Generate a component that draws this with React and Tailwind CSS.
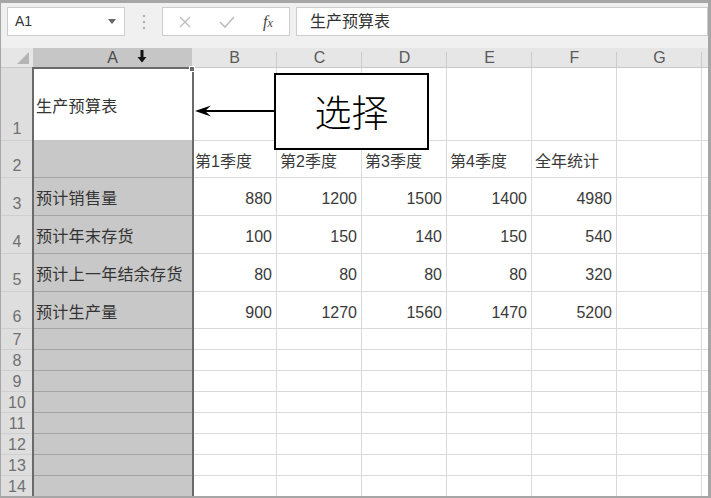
import React from "react";

// Sheet data: first entry is the column A label, the rest are B..F
const rows = [
  { n: 1, h: "73px", cells: ["生产预算表", "", "", "", "", "", ""] },
  { n: 2, h: "37px", cells: ["", "第1季度", "第2季度", "第3季度", "第4季度", "全年统计", ""], text: true },
  { n: 3, h: "38px", cells: ["预计销售量", "880", "1200", "1500", "1400", "4980", ""] },
  { n: 4, h: "38px", cells: ["预计年末存货", "100", "150", "140", "150", "540", ""] },
  { n: 5, h: "38px", cells: ["预计上一年结余存货", "80", "80", "80", "80", "320", ""] },
  { n: 6, h: "37px", cells: ["预计生产量", "900", "1270", "1560", "1470", "5200", ""] },
];
const emptyRows = [7, 8, 9, 10, 11, 12, 13, 14];
const cols = ["A", "B", "C", "D", "E", "F", "G"];

const font = { fontFamily: '"Liberation Sans", "Noto Sans CJK SC", sans-serif' };

function Cell({ value, col, rowNum, isText }) {
  if (col === 0) {
    const active = rowNum === 1;
    return (
      <div
        className={
          "flex items-center pl-[3px] pt-[5px] text-[16px] tracking-[0.3px] text-[#333] border-b whitespace-nowrap overflow-hidden " +
          (active ? "bg-white border-[#c6c6c6]" : "bg-[#c8c8c8] border-[#a4a4a4]")
        }
      >
        {value}
      </div>
    );
  }
  return (
    <div
      className={
        "flex items-center pt-[5px] text-[16px] text-[#3a3a3a] bg-white border-r border-b border-[#dadada] whitespace-nowrap overflow-hidden " +
        (isText ? "justify-start pl-[3px]" : "justify-end pr-[4px]")
      }
    >
      {value}
    </div>
  );
}

function RowHead({ n, tall }) {
  return (
    <div
      className={
        "flex justify-center bg-[#dedede] border-b border-[#cfcfcf] text-[#707070] leading-none text-[16px] " +
        (tall ? "items-end pb-[3px]" : "items-center pt-[1px]")
      }
    >
      {n}
    </div>
  );
}

export default function App() {
  return (
    <div
      className="w-[711px] h-[498px] flex flex-col bg-[#f0f0f0] border-t-[3px] border-r-[3px] border-b-2 border-l border-[#a6a6a6] overflow-hidden"
      style={font}
    >
      {/* formula bar */}
      <div className="h-[45px] shrink-0 flex items-start pt-[4px] pl-[6px]">
        <div className="w-[118px] h-[29px] bg-white border border-[#cdcdcd] flex items-center justify-between pl-[7px] pr-[8px]">
          <span className="text-[14px] text-[#333]">A1</span>
          <svg width="8" height="5" viewBox="0 0 8 5">
            <path d="M0 0 L8 0 L4 5 Z" fill="#666" />
          </svg>
        </div>
        <div className="w-[37px] h-[29px] flex items-center justify-center">
          <svg width="4" height="16" viewBox="0 0 4 16">
            <circle cx="2" cy="2" r="1.2" fill="#b0b0b0" />
            <circle cx="2" cy="8" r="1.2" fill="#b0b0b0" />
            <circle cx="2" cy="14" r="1.2" fill="#b0b0b0" />
          </svg>
        </div>
        <div className="w-[128px] h-[29px] bg-white border border-[#cdcdcd] flex items-center">
          <div className="w-[42px] flex justify-center pl-[2px]">
            <svg width="12" height="12" viewBox="0 0 12 12">
              <path d="M1 1 L11 11 M11 1 L1 11" stroke="#bdbdbd" strokeWidth="1.4" />
            </svg>
          </div>
          <div className="w-[44px] flex justify-center">
            <svg width="16" height="12" viewBox="0 0 16 12">
              <path d="M1 6 L6 11 L15 1" stroke="#bdbdbd" strokeWidth="1.6" fill="none" />
            </svg>
          </div>
          <div className="flex-1 flex justify-center pr-[2px]">
            <span className="italic text-[16px] text-[#444] leading-none" style={{ fontFamily: '"Liberation Serif", serif' }}>
              f<span className="text-[12px]">x</span>
            </span>
          </div>
        </div>
        <div className="w-[6px]" />
        <div className="flex-1 h-[29px] bg-white border border-[#cdcdcd] flex items-center pl-[13px] text-[16px] text-[#333]">
          生产预算表
        </div>
      </div>

      {/* sheet */}
      <div className="relative flex-1 overflow-hidden bg-white">
        <div className="grid grid-cols-[32px_159px_85px_85px_85px_85px_85px_85px_1fr] grid-rows-[20px_73px_37px_38px_38px_38px_37px_21px_21px_21px_21px_21px_21px_21px_21px]">
          {/* column headers */}
          <div className="bg-[#e6e6e6] border-b border-[#c8c8c8] flex items-end justify-end pr-[4px] pb-[3px]">
            <svg width="12" height="12" viewBox="0 0 12 12">
              <path d="M12 0 L12 12 L0 12 Z" fill="#b4b4b4" />
            </svg>
          </div>
          {cols.map((c, i) =>
            i === 0 ? (
              <div key={c} className="relative bg-[#c6c6c6] flex items-center justify-center text-[16px] text-[#4a4a4a] leading-none">
                {c}
                <svg className="absolute left-[104px] top-[2px]" width="10" height="13" viewBox="0 0 10 13">
                  <path d="M3.5 0 H6.5 V7 H9.5 L5 12.5 L0.5 7 H3.5 Z" fill="#111" />
                </svg>
              </div>
            ) : (
              <div key={c} className="relative bg-[#e6e6e6] border-b border-[#c8c8c8] flex items-center justify-center text-[16px] text-[#5a5a5a] leading-none">
                {c}
                <div className="absolute right-0 top-[4px] bottom-0 w-px bg-[#cbcbcb]" />
              </div>
            )
          )}
          <div className="bg-[#e6e6e6] border-b border-[#c8c8c8]" />

          {rows.map((r) => (
            <React.Fragment key={r.n}>
              <RowHead n={r.n} tall />
              {r.cells.map((v, i) => (
                <Cell key={i} value={v} col={i} rowNum={r.n} isText={r.text} />
              ))}
              <div className="bg-white border-b border-[#dadada]" />
            </React.Fragment>
          ))}

          {emptyRows.map((n) => (
            <React.Fragment key={n}>
              <RowHead n={n} />
              {cols.map((c, i) => (
                <Cell key={c} value="" col={i} rowNum={n} />
              ))}
              <div className="bg-white border-b border-[#dadada]" />
            </React.Fragment>
          ))}
        </div>

        {/* column A selection outline */}
        <div className="absolute left-[31px] top-[19px] w-[162px] h-[480px] border-2 border-[#6a6a6a]" />
        <div className="absolute left-[188px] top-[18px] w-[6px] h-[6px] bg-[#6a6a6a] border border-white" />

        {/* callout */}
        <svg className="absolute left-[193px] top-[56px]" width="82" height="14" viewBox="0 0 82 14">
          <path d="M4 7 H82" stroke="#000" strokeWidth="2" />
          <path d="M1 7 L17 1.5 L11 7 L17 12.5 Z" fill="#000" />
        </svg>
        <div
          className="absolute left-[273px] top-[25px] w-[155px] h-[77px] border-2 border-black bg-white flex items-center justify-center text-[37px] font-light text-black leading-none"
          style={{ fontFamily: '"Noto Sans CJK SC", sans-serif' }}
        >
          选择
        </div>
      </div>
    </div>
  );
}
